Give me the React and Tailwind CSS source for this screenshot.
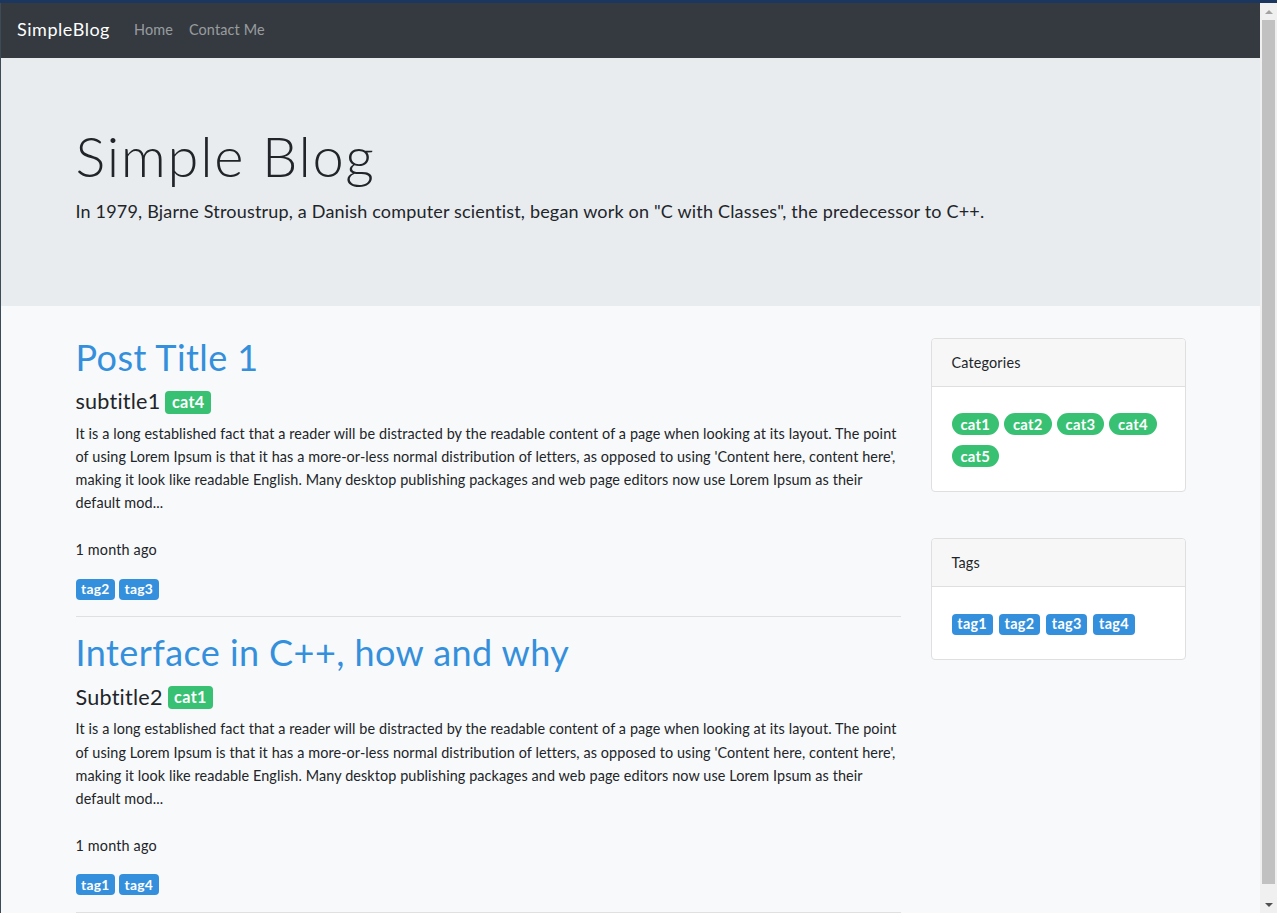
import React from "react";

const lorem =
  "It is a long established fact that a reader will be distracted by the readable content of a page when looking at its layout. The point of using Lorem Ipsum is that it has a more-or-less normal distribution of letters, as opposed to using 'Content here, content here', making it look like readable English. Many desktop publishing packages and web page editors now use Lorem Ipsum as their default mod...";

const posts = [
  { title: "Post Title 1", subtitle: "subtitle1", cat: "cat4", tags: ["tag2", "tag3"] },
  { title: "Interface in C++, how and why", subtitle: "Subtitle2", cat: "cat1", tags: ["tag1", "tag4"] },
];

function Badge({ children, pill, color = "blue", className = "" }) {
  return (
    <span
      className={`inline-block font-bold leading-none text-white tracking-[0.02em] ${
        pill ? "px-[0.6em] rounded-full" : "px-[0.4em] rounded-[4px]"
      } ${color === "green" ? "bg-[#38c172]" : "bg-[#3490dc]"} ${className}`}
    >
      {children}
    </span>
  );
}

function Post({ post }) {
  return (
    <div>
      <h1 className="text-[36px] leading-[43.2px] mb-2 text-[#3490dc] font-normal tracking-[0.012em] -mt-[2px] pb-[2px]">
        {post.title}
      </h1>
      <h4 className="text-[21.6px] leading-[25.9px] mb-2 flex items-center gap-[5px] tracking-[0.01em]">
        {post.subtitle}
        <Badge color="green" className="text-[16.2px] py-[3.5px]">{post.cat}</Badge>
      </h4>
      <p className="mb-[23px] tracking-[0.1px] -mt-px pb-px">{lorem}</p>
      <p className="mb-[17px]">1 month ago</p>
      <div className="flex gap-[4px] h-[22px] items-center text-[13.8px]">
        {post.tags.map((t) => (
          <Badge key={t} className="py-[3.5px]">{t}</Badge>
        ))}
      </div>
      <hr className="my-4 border-0 border-t border-[#dfe0e1]" />
    </div>
  );
}

function Card({ title, children, className = "" }) {
  return (
    <div className={`bg-white border border-[#dfdfdf] rounded-[4px] ${className}`}>
      <div className="px-5 py-3 bg-[#f7f7f7] border-b border-[#dfdfdf] rounded-t-[4px]">{title}</div>
      <div className="p-5">{children}</div>
    </div>
  );
}

function Scrollbar() {
  return (
    <div className="w-[17px] bg-[#f0f0f0] flex flex-col items-center">
      <div className="h-[17px] flex items-center justify-center">
        <div className="w-0 h-0 border-l-[4px] border-r-[4px] border-b-[4px] border-l-transparent border-r-transparent border-b-[#a3a3a3]" />
      </div>
      <div className="w-[13px] flex-1 bg-[#c1c1c1]" />
      <div className="h-[12px]" />
      <div className="h-[17px] flex items-center justify-center">
        <div className="w-0 h-0 border-l-[4px] border-r-[4px] border-t-[4px] border-l-transparent border-r-transparent border-t-[#505050]" />
      </div>
    </div>
  );
}

export default function App() {
  return (
    <div
      className="h-[913px] overflow-hidden flex flex-col text-[14.4px] leading-[23.04px] text-[#212529] tracking-[0.011em]"
      style={{ fontFamily: "Lato, 'Noto Sans', sans-serif" }}
    >
      <div className="h-[3px] bg-[#1b365f] shrink-0" />
      <div className="flex flex-1 min-h-0">
        <div className="w-px bg-[#3d4a57] shrink-0" />
        <div className="flex-1 overflow-hidden bg-[#f8f9fa]">
          {/* navbar */}
          <nav className="bg-[#343a40] px-4 py-2 flex items-center h-[55px]">
            <span className="text-white text-[18px] leading-[28.8px] py-[5px] mr-4 tracking-[0.03em] -mt-[2px]">SimpleBlog</span>
            <a className="px-2 py-2 text-white/50 tracking-[0.01em] -mt-[2px]">Home</a>
            <a className="px-2 py-2 text-white/50 tracking-[0.01em] -mt-[2px]">Contact Me</a>
          </nav>

          {/* jumbotron */}
          <div className="bg-[#e9ecef] py-16 mb-8">
            <div className="max-w-[1140px] mx-auto px-[15px]">
              <h1 className="text-[56px] leading-[67.2px] font-light mb-2 tracking-[0.03em]">Simple Blog</h1>
              <p className="text-[18px] leading-[28.8px] mb-4 tracking-[0.01em]">
                In 1979, Bjarne Stroustrup, a Danish computer scientist, began work on "C with Classes", the predecessor to C++.
              </p>
            </div>
          </div>

          <div className="max-w-[1140px] mx-auto flex">
            <div className="w-[855px] px-[15px]">
              {posts.map((p) => (
                <Post key={p.title} post={p} />
              ))}
            </div>
            <div className="w-[285px] px-[15px] pt-px">
              <Card title="Categories" className="-mt-px">
                <div className="flex flex-wrap gap-x-[5px] text-[14.8px]">
                  {["cat1", "cat2", "cat3", "cat4", "cat5"].map((c) => (
                    <Badge key={c} pill color="green" className="mt-[6px] mb-[4px] py-[3.6px]">
                      {c}
                    </Badge>
                  ))}
                </div>
              </Card>
              <Card title="Tags" className="mt-[46px]">
                <div className="flex flex-wrap gap-x-[6px] text-[14.4px]">
                  {["tag1", "tag2", "tag3", "tag4"].map((t) => (
                    <Badge key={t} className="mt-[7px] mb-[4px] py-[3.3px]">
                      {t}
                    </Badge>
                  ))}
                </div>
              </Card>
            </div>
          </div>
        </div>
        <Scrollbar />
      </div>
    </div>
  );
}
